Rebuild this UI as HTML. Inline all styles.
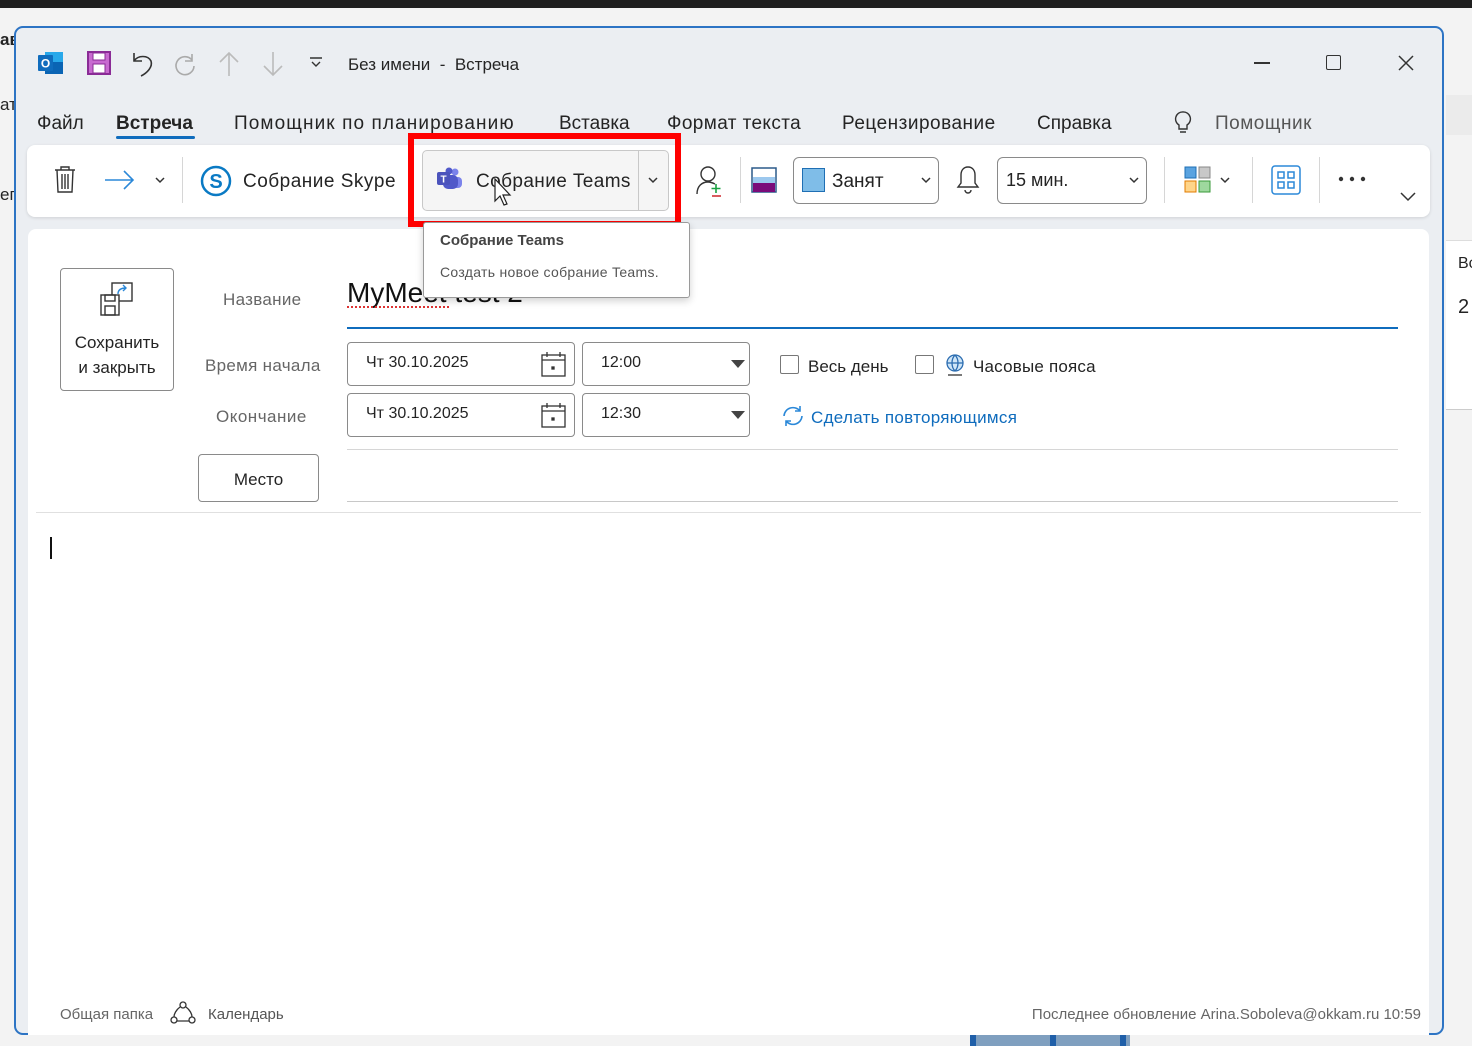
<!DOCTYPE html>
<html><head><meta charset="utf-8"><style>
*{margin:0;padding:0;box-sizing:border-box}
body{width:1472px;height:1046px;overflow:hidden;background:#d9d9d9;font-family:"Liberation Sans",sans-serif;position:relative;color:#242424}
.a{position:absolute;white-space:nowrap}
.win{position:absolute;left:14px;top:26px;width:1430px;height:1009px;background:#ebeef2;border:2px solid #2d74c4;border-radius:9px;overflow:hidden}
.card{position:absolute;background:#fff;border-radius:8px;box-shadow:0 1px 3px rgba(0,0,0,.12)}
.tab{font-size:19px;color:#242424;top:113px}
.lbl{font-size:17px;color:#666}
.box{position:absolute;background:#fff;border:1px solid #8a8a8a;border-radius:4px}
.sep{position:absolute;width:1px;height:46px;background:#d6d6d6;top:157px}
</style></head><body>
<div class="a" style="left:0;top:0;width:1472px;height:8px;background:#1f1f1f"></div>
<div class="a" style="left:0;top:8px;width:1472px;height:1038px;background:#f3f3f3"></div>
<div class="a" style="left:0;top:30px;font-size:17px;font-weight:bold">ав</div>
<div class="a" style="left:0;top:95px;font-size:17px">ат</div>
<div class="a" style="left:0;top:185px;font-size:17px">ег</div>
<div class="a" style="left:1446px;top:95px;width:26px;height:40px;background:#ebebeb"></div>
<div class="a" style="left:1446px;top:240px;width:26px;height:170px;background:#fff;border-top:1px solid #ddd;border-bottom:1px solid #ccc"></div>
<div class="a" style="left:1458px;top:255px;font-size:16px">Вс</div>
<div class="a" style="left:1458px;top:296px;font-size:20px">2</div>
<div class="a" style="left:970px;top:1035px;width:160px;height:11px;background:#7f9fbf"></div>
<div class="a" style="left:970px;top:1035px;width:6px;height:11px;background:#1f5fa8"></div>
<div class="a" style="left:1050px;top:1035px;width:6px;height:11px;background:#1f5fa8"></div>
<div class="a" style="left:1120px;top:1035px;width:6px;height:11px;background:#1f5fa8"></div>

<div class="win"></div>
<svg class="a" style="left:37px;top:50px" width="28" height="26" viewBox="0 0 28 26"><rect x="8" y="2" width="18" height="20" fill="#28a8ea"/><rect x="8" y="12" width="18" height="12" fill="#0a64b4"/><rect x="1" y="5" width="15" height="16" rx="1" fill="#0f6cbd"/><text x="8.5" y="17.5" font-size="12" font-weight="bold" fill="#fff" text-anchor="middle" font-family="Liberation Sans">O</text></svg>
<svg class="a" style="left:86px;top:50px" width="26" height="26" viewBox="0 0 26 26"><rect x="2" y="2" width="22" height="22" fill="#c86ad0" stroke="#8a2b96" stroke-width="2"/><rect x="7" y="3" width="12" height="7" fill="#fff" stroke="#8a2b96"/><rect x="7" y="14" width="12" height="9" fill="#fff" stroke="#8a2b96"/></svg>
<svg class="a" style="left:130px;top:50px" width="26" height="28" fill="none" stroke="#333" stroke-width="1.6"><path d="M4 3v8h8"/><path d="M4 11c4-6 14-6 17 0 2 6-4 12-10 15"/></svg>
<svg class="a" style="left:172px;top:50px" width="28" height="28" fill="none" stroke="#aaa" stroke-width="1.6"><path d="M20 4v7h-7"/><path d="M20 10A9 9 0 1 0 22 16"/></svg>
<svg class="a" style="left:218px;top:50px" width="22" height="28" fill="none" stroke="#bbb" stroke-width="1.6"><path d="M11 26V3M2 12l9-9 9 9"/></svg>
<svg class="a" style="left:262px;top:50px" width="22" height="28" fill="none" stroke="#bbb" stroke-width="1.6"><path d="M11 2v23M2 16l9 9 9-9"/></svg>
<svg class="a" style="left:309px;top:57px" width="14" height="12" fill="none" stroke="#333" stroke-width="1.4"><path d="M1 1h12M3 5l4 4 4-4"/></svg>
<div class="a" style="left:348px;top:55px;font-size:17px">Без имени&nbsp; -&nbsp; Встреча</div>
<div class="a" style="left:1254px;top:62px;width:16px;height:1.5px;background:#333"></div>
<div class="a" style="left:1326px;top:55px;width:15px;height:15px;border:1.5px solid #333;border-radius:2px"></div>
<svg class="a" style="left:1398px;top:55px" width="16" height="16" stroke="#333" stroke-width="1.5"><path d="M1 1l14 14M15 1L1 15"/></svg>
<div class="a tab" style="left:37px">Файл</div>
<div class="a tab" style="left:116px;font-weight:bold">Встреча</div>
<div class="a" style="left:116px;top:136px;width:79px;height:3px;background:#0f6cbd;border-radius:2px"></div>
<div class="a tab" style="left:234px;letter-spacing:1.1px">Помощник по планированию</div>
<div class="a tab" style="left:559px">Вставка</div>
<div class="a tab" style="left:667px;letter-spacing:0.4px">Формат текста</div>
<div class="a tab" style="left:842px;letter-spacing:0.5px">Рецензирование</div>
<div class="a tab" style="left:1037px">Справка</div>
<svg class="a" style="left:1172px;top:110px" width="22" height="26" fill="none" stroke="#333" stroke-width="1.4"><path d="M11 2a7 7 0 0 0-4 13v4h8v-4a7 7 0 0 0-4-13zM8 22h6"/></svg>
<div class="a tab" style="left:1215px;color:#555;letter-spacing:0.5px">Помощник</div>
<div class="card" style="left:27px;top:145px;width:1403px;height:72px"></div>
<svg class="a" style="left:53px;top:166px" width="24" height="28" fill="none" stroke="#333" stroke-width="1.4"><path d="M2 4h20M8 4V1h8v3M4 4l1 22h14l1-22M9 8v15M12 8v15M15 8v15"/></svg>
<svg class="a" style="left:104px;top:169px" width="32" height="22" fill="none" stroke="#2b88d8" stroke-width="1.6"><path d="M1 11h28M20 2l9 9-9 9"/></svg>
<svg class="a" style="left:155px;top:176px" width="11" height="8" fill="none" stroke="#333" stroke-width="1.5"><path d="M1 2l4 4 4-4"/></svg>
<div class="sep" style="left:182px"></div>
<svg class="a" style="left:200px;top:165px" width="32" height="32"><circle cx="16" cy="16" r="14" fill="#fff" stroke="#0a7ac4" stroke-width="2.5"/><text x="16" y="23" font-size="20" font-weight="bold" fill="#0a7ac4" text-anchor="middle" font-family="Liberation Sans">S</text></svg>
<div class="a" style="left:243px;top:171px;font-size:19px;letter-spacing:0.5px">Собрание Skype</div>
<div class="sep" style="left:410px"></div>
<div class="a" style="left:422px;top:150px;width:247px;height:61px;background:#f5f5f5;border:1px solid #c8c8c8;border-radius:5px"></div>
<div class="a" style="left:638px;top:151px;width:1px;height:59px;background:#c8c8c8"></div>
<svg class="a" style="left:436px;top:167px" width="28" height="24"><circle cx="19" cy="5" r="3.5" fill="#7b83eb"/><rect x="14" y="10" width="12" height="11" rx="4" fill="#7b83eb"/><circle cx="13" cy="4" r="3.5" fill="#5059c9"/><rect x="7" y="8" width="15" height="14" rx="5" fill="#5059c9"/><rect x="1" y="5" width="13" height="13" rx="2" fill="#4b53bc"/><text x="7.5" y="15.5" font-size="10" font-weight="bold" fill="#fff" text-anchor="middle" font-family="Liberation Sans">T</text></svg>
<div class="a" style="left:476px;top:171px;font-size:19px;letter-spacing:0.4px">Собрание Teams</div>
<svg class="a" style="left:648px;top:176px" width="11" height="8" fill="none" stroke="#333" stroke-width="1.5"><path d="M1 2l4 4 4-4"/></svg>
<svg class="a" style="left:493px;top:178px" width="22" height="30"><path d="M2 1v22l5-5 4 9 3-1-4-9h7z" fill="#fff" stroke="#222" stroke-width="1.2"/></svg>
<div class="a" style="left:408px;top:133px;width:273px;height:94px;border:6px solid #f00"></div>
<svg class="a" style="left:695px;top:164px" width="32" height="34" fill="none" stroke="#333" stroke-width="1.4"><circle cx="13" cy="10" r="7"/><path d="M2 30c0-8 5-12 11-12 3 0 5 1 7 2"/><path d="M21 20v9M16.5 24.5h9" stroke="#1aa142" stroke-width="1.6"/><path d="M17 32h9" stroke="#d13438" stroke-width="1.6"/></svg>
<div class="sep" style="left:740px"></div>
<svg class="a" style="left:751px;top:167px" width="26" height="26"><rect x="1" y="1" width="24" height="24" fill="#fff" stroke="#2b5a8a" stroke-width="1.5"/><rect x="2" y="10" width="22" height="6" fill="#9cc8ee"/><rect x="2" y="16" width="22" height="9" fill="#7a0b7a"/></svg>
<div class="box" style="left:793px;top:157px;width:146px;height:47px;border-radius:6px"></div>
<div class="a" style="left:802px;top:168px;width:23px;height:24px;background:#7fbde8;border:1.5px solid #1f6fb4"></div>
<div class="a" style="left:832px;top:171px;font-size:19px">Занят</div>
<svg class="a" style="left:921px;top:176px" width="11" height="8" fill="none" stroke="#333" stroke-width="1.5"><path d="M1 2l4 4 4-4"/></svg>
<svg class="a" style="left:956px;top:165px" width="24" height="30" fill="none" stroke="#333" stroke-width="1.4"><path d="M12 2c-5 0-7 4-7 8v8l-3 4h20l-3-4v-8c0-4-2-8-7-8zM9 25a3 3 0 0 0 6 0"/></svg>
<div class="box" style="left:997px;top:157px;width:150px;height:47px;border-radius:6px"></div>
<div class="a" style="left:1006px;top:170px;font-size:18px">15 мин.</div>
<svg class="a" style="left:1129px;top:176px" width="11" height="8" fill="none" stroke="#333" stroke-width="1.5"><path d="M1 2l4 4 4-4"/></svg>
<div class="sep" style="left:1164px"></div>
<svg class="a" style="left:1184px;top:166px" width="30" height="28"><rect x="1" y="1" width="11" height="11" fill="#5aa3e0" stroke="#1f6fb4"/><rect x="15" y="1" width="11" height="11" fill="#c8c8c8" stroke="#888"/><rect x="1" y="15" width="11" height="11" fill="#ffd58a" stroke="#e07b00"/><rect x="15" y="15" width="11" height="11" fill="#9ed89e" stroke="#3a9a3a"/></svg>
<svg class="a" style="left:1220px;top:176px" width="11" height="8" fill="none" stroke="#333" stroke-width="1.5"><path d="M1 2l4 4 4-4"/></svg>
<div class="sep" style="left:1252px"></div>
<svg class="a" style="left:1271px;top:165px" width="30" height="30" fill="none" stroke="#2b88d8" stroke-width="1.5"><rect x="1" y="1" width="28" height="28" rx="3"/><rect x="7" y="7" width="6" height="6"/><rect x="17" y="7" width="6" height="6"/><rect x="7" y="17" width="6" height="6"/><rect x="17" y="17" width="6" height="6"/></svg>
<div class="sep" style="left:1319px"></div>
<svg class="a" style="left:1338px;top:176px" width="28" height="6"><circle cx="3" cy="3" r="2.2" fill="#333"/><circle cx="14" cy="3" r="2.2" fill="#333"/><circle cx="25" cy="3" r="2.2" fill="#333"/></svg>
<svg class="a" style="left:1400px;top:192px" width="16" height="10" fill="none" stroke="#333" stroke-width="1.5"><path d="M1 1l7 7 7-7"/></svg>
<div class="a" style="left:28px;top:229px;width:1401px;height:806px;background:#fff;border-radius:8px 8px 0 0"></div>
<div class="a" style="left:60px;top:268px;width:114px;height:123px;border:1px solid #8a8a8a;border-radius:4px;background:#fff"></div>
<svg class="a" style="left:98px;top:281px" width="38" height="38" fill="none" stroke="#333" stroke-width="1.4"><rect x="14" y="2" width="20" height="18" fill="#fff"/><path d="M20 13c0-4 3-6 8-6M25 4l3 3-3 3" stroke="#2b88d8"/><rect x="3" y="14" width="18" height="20" fill="#fff"/><rect x="7" y="14" width="10" height="6"/><rect x="7" y="25" width="10" height="9"/></svg>
<div class="a" style="left:60px;top:330px;width:114px;text-align:center;font-size:17px;line-height:25px;white-space:normal">Сохранить<br>и закрыть</div>
<div class="a lbl" style="left:223px;top:290px;letter-spacing:0.3px">Название</div>
<div class="a lbl" style="left:205px;top:356px;letter-spacing:0.3px">Время начала</div>
<div class="a lbl" style="left:216px;top:407px;letter-spacing:0.5px">Окончание</div>
<div class="a" style="left:347px;top:277px;font-size:28px;color:#111">MyMeet test 2</div>
<div class="a" style="left:347px;top:306px;width:102px;border-bottom:2px dotted #d33"></div>
<div class="a" style="left:347px;top:327px;width:1051px;height:2px;background:#0f6cbd"></div>
<div class="box" style="left:347px;top:342px;width:228px;height:44px"></div>
<div class="a" style="left:366px;top:354px;font-size:16px">Чт 30.10.2025</div>
<svg class="a" style="left:541px;top:351px" width="25" height="26" fill="none" stroke="#333" stroke-width="1.3"><rect x="1" y="4" width="23" height="21"/><path d="M1 9h23M6 1v5M19 1v5"/><rect x="11" y="16" width="2" height="2" fill="#333"/></svg>
<div class="box" style="left:582px;top:342px;width:168px;height:44px"></div>
<div class="a" style="left:601px;top:354px;font-size:16px">12:00</div>
<svg class="a" style="left:731px;top:360px" width="14" height="8"><path d="M0 0h14L7 8z" fill="#444"/></svg>
<div class="box" style="left:347px;top:393px;width:228px;height:44px"></div>
<div class="a" style="left:366px;top:405px;font-size:16px">Чт 30.10.2025</div>
<svg class="a" style="left:541px;top:402px" width="25" height="26" fill="none" stroke="#333" stroke-width="1.3"><rect x="1" y="4" width="23" height="21"/><path d="M1 9h23M6 1v5M19 1v5"/><rect x="11" y="16" width="2" height="2" fill="#333"/></svg>
<div class="box" style="left:582px;top:393px;width:168px;height:44px"></div>
<div class="a" style="left:601px;top:405px;font-size:16px">12:30</div>
<svg class="a" style="left:731px;top:411px" width="14" height="8"><path d="M0 0h14L7 8z" fill="#444"/></svg>
<div class="a" style="left:780px;top:355px;width:19px;height:19px;border:1px solid #777;border-radius:2px"></div>
<div class="a" style="left:808px;top:357px;font-size:17px">Весь день</div>
<div class="a" style="left:915px;top:355px;width:19px;height:19px;border:1px solid #777;border-radius:2px"></div>
<svg class="a" style="left:944px;top:353px" width="22" height="24" fill="none" stroke="#2b6cb0" stroke-width="1.3"><circle cx="11" cy="10" r="8" fill="#cfe6f8"/><path d="M3 10h16M11 2c-4 4-4 12 0 16M11 2c4 4 4 12 0 16" /><path d="M4 22h14" stroke="#333"/></svg>
<div class="a" style="left:973px;top:357px;font-size:17px;letter-spacing:0.2px">Часовые пояса</div>
<svg class="a" style="left:780px;top:404px" width="26" height="24" fill="none" stroke="#2b88d8" stroke-width="1.6"><path d="M4 12a9 9 0 0 1 16-5M22 12a9 9 0 0 1-16 5M20 2v5h-5M6 22v-5h5"/></svg>
<div class="a" style="left:811px;top:408px;font-size:17px;color:#0f6cbd;letter-spacing:0.3px">Сделать повторяющимся</div>
<div class="a" style="left:347px;top:449px;width:1051px;height:1px;background:#d6d6d6"></div>
<div class="box" style="left:198px;top:454px;width:121px;height:48px"></div>
<div class="a" style="left:198px;top:470px;width:121px;text-align:center;font-size:17px">Место</div>
<div class="a" style="left:347px;top:501px;width:1051px;height:1px;background:#c8c8c8"></div>
<div class="a" style="left:36px;top:512px;width:1385px;height:1px;background:#e0e0e0"></div>
<div class="a" style="left:50px;top:537px;width:1.5px;height:22px;background:#111"></div>
<div class="a" style="left:60px;top:1006px;font-size:15px;color:#666">Общая папка</div>
<svg class="a" style="left:170px;top:1001px" width="26" height="24" fill="none" stroke="#333" stroke-width="1.3"><circle cx="13" cy="4" r="3"/><circle cx="4" cy="19" r="3"/><circle cx="22" cy="19" r="3"/><path d="M10 6c-4 3-6 7-6 10M16 6c4 3 6 7 6 10M7 20h12"/></svg>
<div class="a" style="left:208px;top:1006px;font-size:15px;color:#555">Календарь</div>
<div class="a" style="right:51px;top:1006px;font-size:15px;color:#666">Последнее обновление Arina.Soboleva@okkam.ru 10:59</div>
<div class="a" style="left:423px;top:222px;width:267px;height:76px;background:#fff;border:1px solid #9a9a9a;border-radius:3px;box-shadow:0 3px 8px rgba(0,0,0,.18)"></div>
<div class="a" style="left:440px;top:232px;font-size:15px;font-weight:bold;color:#444">Собрание Teams</div>
<div class="a" style="left:440px;top:264px;font-size:14px;color:#555;letter-spacing:0.3px">Создать новое собрание Teams.</div>
</body></html>
